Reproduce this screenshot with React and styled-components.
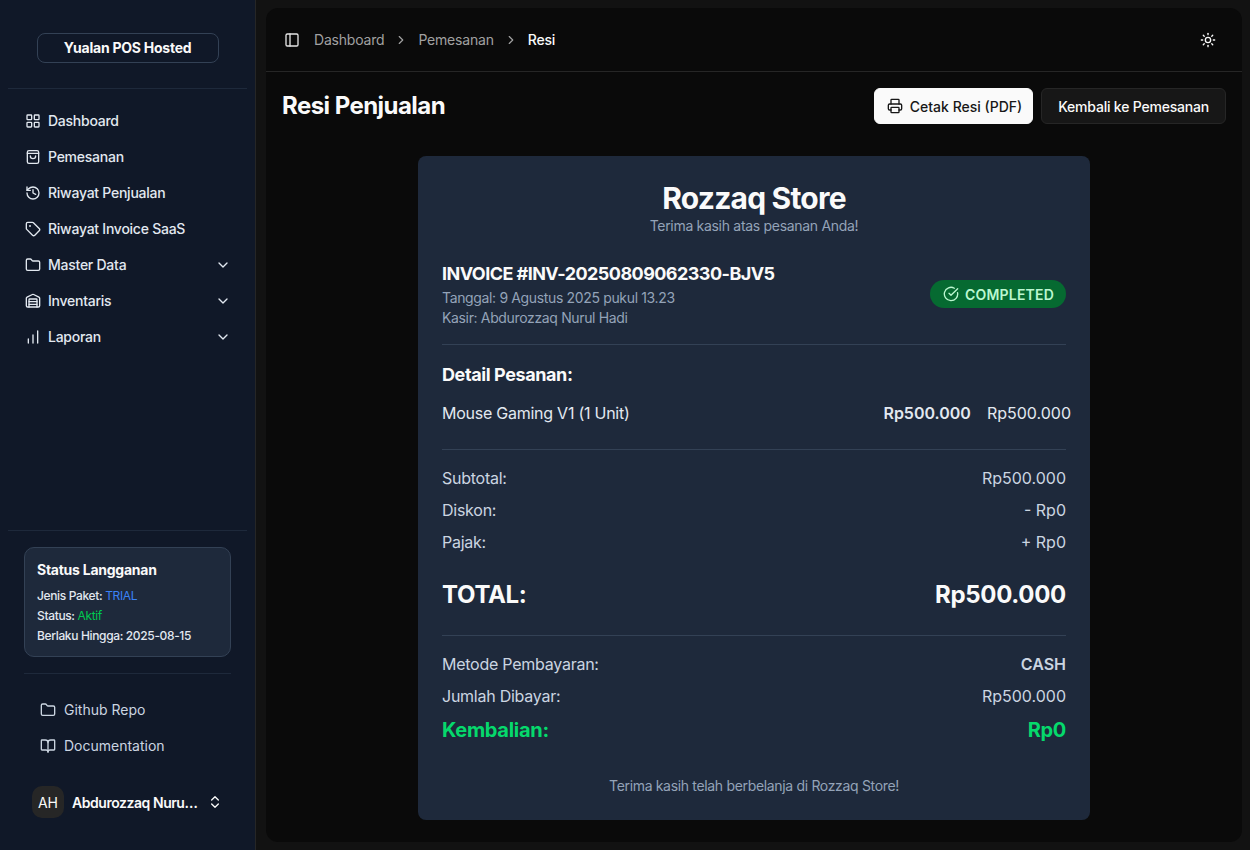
import React from 'react';
import styled, { createGlobalStyle } from 'styled-components';
import {
  LayoutGrid, History, Tag, Folder, Warehouse, ChartNoAxesColumnIncreasing, ChevronDown, ChevronRight,
  PanelLeft, Sun, Printer, CircleCheckBig, BookOpen, ChevronsUpDown,
} from 'lucide-react';

const Global = createGlobalStyle`
  html, body { margin: 0; height: 100%; background: #121212; }
  body { font-family: "Inter", "Liberation Sans", sans-serif; color: #fafafa; }
  * { box-sizing: border-box; }
`;

const Page = styled.div`
  display: flex;
  width: 1250px;
  height: 850px;
  overflow: hidden;
`;

const Sidebar = styled.aside`
  width: 256px;
  flex: none;
  height: 100%;
  display: flex;
  flex-direction: column;
  background: #101828;
  border-right: 1px solid #262626;
`;

const SidebarHead = styled.div`
  margin: 0 8px;
  padding: 33px 0 25px;
  display: flex;
  justify-content: center;
  border-bottom: 1px solid #1e293b;
`;

const Brand = styled.div`
  width: 182px;
  height: 30px;
  display: flex;
  align-items: center;
  justify-content: center;
  padding-bottom: 1px;
  border: 1px solid #334155;
  border-radius: 8px;
  font-size: 14px;
  font-weight: 700;
  letter-spacing: -0.25px;
`;

const Nav = styled.nav`
  flex: 1;
  padding: 14px 16px;
  display: flex;
  flex-direction: column;
`;

const NavItem = styled.div`
  height: 36px;
  display: flex;
  align-items: center;
  gap: 7px;
  padding: 0 8px 0 9px;
  font-size: 14px;
  font-weight: 500;
  color: #e2e8f0;
  letter-spacing: -0.25px;
  svg { flex: none; }
`;

const NavLabel = styled.span`
  flex: 1;
  padding-bottom: 1px;
`;

const FooterTop = styled.div`
  margin: 0 8px;
  padding: 16px;
  border-top: 1px solid #1e293b;
`;

const StatusCard = styled.div`
  height: 110px;
  padding: 13px 12px;
  background: #1e293b;
  border: 1px solid #334155;
  border-radius: 10px;
`;

const StatusTitle = styled.div`
  font-size: 14px;
  font-weight: 700;
  margin-bottom: 7px;
  line-height: 18px;
  letter-spacing: -0.25px;
`;

const StatusLine = styled.div`
  font-size: 12px;
  font-weight: 500;
  line-height: 20px;
  color: #e2e8f0;
  letter-spacing: -0.35px;
`;

const Accent = styled.span`
  font-weight: 400;
  color: ${p => p.$color};
`;

const FooterBottom = styled.div`
  margin: 0 24px;
  padding: 18px 16px 0;
  border-top: 1px solid #1e293b;
`;

const FooterLink = styled(NavItem)`
  padding: 0;
  gap: 8px;
  font-weight: 400;
  color: #cbd5e1;
  letter-spacing: 0;
`;

const UserRow = styled.div`
  display: flex;
  align-items: center;
  margin: 0 0 32px 32px;
  gap: 8px;
  padding-top: 22px;
`;

const Avatar = styled.div`
  width: 32px;
  height: 32px;
  display: flex;
  align-items: center;
  justify-content: center;
  border-radius: 10px;
  background: #262626;
  font-size: 14px;
`;

const UserName = styled.div`
  width: 127px;
  font-size: 14px;
  font-weight: 600;
  white-space: nowrap;
  overflow: hidden;
  text-overflow: ellipsis;
  letter-spacing: -0.45px;
`;

const MainWrap = styled.div`
  flex: 1;
  padding: 8px 8px 8px 10px;
`;

const Main = styled.main`
  height: 100%;
  background: #0a0a0a;
  border-radius: 12px;
  display: flex;
  flex-direction: column;
`;

const TopBar = styled.header`
  height: 64px;
  flex: none;
  padding: 0 26px 0 18px;
  display: flex;
  align-items: center;
  border-bottom: 1px solid #262626;
`;

const Crumbs = styled.div`
  flex: 1;
  display: flex;
  align-items: center;
  gap: 10px;
  margin-left: 14px;
  font-size: 14px;
  color: #a1a1a1;
  letter-spacing: -0.2px;
`;

const Crumb = styled.span`
  color: ${p => (p.$current ? '#fafafa' : '#a1a1a1')};
  font-weight: ${p => (p.$current ? 500 : 400)};
`;

const TitleRow = styled.div`
  padding: 16px 16px 0;
  display: flex;
  align-items: center;
  gap: 8px;
`;

const Title = styled.h1`
  flex: 1;
  margin: 0;
  padding-bottom: 2px;
  font-size: 24px;
  font-weight: 700;
  letter-spacing: -0.55px;
`;

const Button = styled.button`
  height: 36px;
  display: flex;
  align-items: center;
  gap: 7px;
  padding: 0 ${p => (p.$light ? '10px' : '16px')} 0 ${p => (p.$light ? '12px' : '16px')};
  border-radius: 6px;
  border: 1px solid ${p => (p.$light ? '#fafafa' : '#262626')};
  background: ${p => (p.$light ? '#fafafa' : '#171717')};
  color: ${p => (p.$light ? '#171717' : '#fafafa')};
  font-family: inherit;
  font-size: 14px;
  font-weight: 500;
  letter-spacing: ${p => (p.$light ? '0' : '-0.2px')};
`;

const Content = styled.div`
  flex: 1;
  display: flex;
  justify-content: center;
  padding-top: 32px;
`;

const Receipt = styled.section`
  width: 672px;
  height: 664px;
  padding: 24px;
  background: #1e293b;
  border-radius: 8px;
`;

const ReceiptHead = styled.div`
  text-align: center;
`;

const StoreName = styled.div`
  font-size: 30px;
  font-weight: 700;
  line-height: 36px;
  letter-spacing: -0.8px;
`;

const Thanks = styled.div`
  font-size: 14px;
  line-height: 20px;
  color: #94a3b8;
  letter-spacing: -0.3px;
`;

const InvoiceRow = styled.div`
  margin-top: 24px;
  padding-bottom: 16px;
  display: flex;
  align-items: center;
  justify-content: space-between;
  border-bottom: 1px solid #334155;
`;

const InvoiceNo = styled.div`
  font-size: 18px;
  font-weight: 700;
  line-height: 28px;
  letter-spacing: -0.55px;
`;

const Meta = styled.div`
  font-size: 14px;
  line-height: 20px;
  color: #94a3b8;
  letter-spacing: -0.35px;
`;

const Badge = styled.div`
  height: 28px;
  display: flex;
  align-items: center;
  gap: 6px;
  padding: 0 12px 0 13px;
  border-radius: 14px;
  background: #066a31;
  color: #bbf7d0;
  font-size: 14px;
  font-weight: 600;
  letter-spacing: 0.2px;
`;

const SectionTitle = styled.h2`
  margin: 16px 0 0;
  font-size: 18px;
  font-weight: 700;
  line-height: 28px;
  letter-spacing: -0.4px;
`;

const ItemRow = styled.div`
  height: 61px;
  padding-top: 12px;
  display: flex;
  justify-content: space-between;
  font-size: 16px;
  line-height: 24px;
  color: #e2e8f0;
  border-bottom: 1px solid #334155;
`;

const ItemName = styled.span`
  letter-spacing: -0.25px;
`;

const ItemPrices = styled.div`
  display: flex;
  gap: 16px;
  margin-right: -5px;
`;

const Strong = styled.span`
  font-weight: 600;
`;

const Totals = styled.div`
  padding-top: 16px;
  display: flex;
  flex-direction: column;
  gap: 8px;
`;

const Line = styled.div`
  display: flex;
  justify-content: space-between;
  font-size: 16px;
  line-height: 24px;
  color: #cbd5e1;
`;

const LineLabel = styled.span`
  letter-spacing: -0.25px;
`;

const GrandTotal = styled.div`
  margin-top: 17px;
  padding-bottom: 24px;
  display: flex;
  justify-content: space-between;
  font-size: 24px;
  font-weight: 700;
  line-height: 32px;
  letter-spacing: -0.3px;
  border-bottom: 1px solid #334155;
`;

const Payment = styled.div`
  padding-top: 16px;
  display: flex;
  flex-direction: column;
  gap: 8px;
`;

const Change = styled(Line)`
  font-size: 20px;
  font-weight: 700;
  line-height: 28px;
  color: #05d96c;
  letter-spacing: -0.3px;
`;

const ReceiptFoot = styled.div`
  margin-top: 32px;
  text-align: center;
  font-size: 14px;
  line-height: 20px;
  color: #94a3b8;
  letter-spacing: -0.33px;
`;

const BagIcon = () => (
  <svg width="16" height="16" viewBox="0 0 24 24" fill="none" stroke="currentColor" strokeWidth="2" strokeLinecap="round" strokeLinejoin="round">
    <rect x="3.5" y="2.5" width="17" height="19" rx="2.5" />
    <path d="M3.5 6.5h17" />
    <path d="M16 10.5a4 4 0 0 1-8 0" />
  </svg>
);

const menu = [
  { label: 'Dashboard', icon: <LayoutGrid size={16} /> },
  { label: 'Pemesanan', icon: <BagIcon /> },
  { label: 'Riwayat Penjualan', icon: <History size={16} /> },
  { label: 'Riwayat Invoice SaaS', icon: <Tag size={16} /> },
  { label: 'Master Data', icon: <Folder size={16} />, more: true },
  { label: 'Inventaris', icon: <Warehouse size={16} />, more: true },
  { label: 'Laporan', icon: <ChartNoAxesColumnIncreasing size={16} />, more: true },
];

export default function App() {
  return (
    <Page>
      <Global />
      <Sidebar>
        <SidebarHead>
          <Brand>Yualan POS Hosted</Brand>
        </SidebarHead>
        <Nav>
          {menu.map(m => (
            <NavItem key={m.label}>
              {m.icon}
              <NavLabel>{m.label}</NavLabel>
              {m.more && <ChevronDown size={16} />}
            </NavItem>
          ))}
        </Nav>
        <FooterTop>
          <StatusCard>
            <StatusTitle>Status Langganan</StatusTitle>
            <StatusLine>Jenis Paket: <Accent $color="#3b82f6">TRIAL</Accent></StatusLine>
            <StatusLine>Status: <Accent $color="#00c950">Aktif</Accent></StatusLine>
            <StatusLine>Berlaku Hingga: 2025-08-15</StatusLine>
          </StatusCard>
        </FooterTop>
        <FooterBottom>
          <FooterLink><Folder size={16} /><NavLabel>Github Repo</NavLabel></FooterLink>
          <FooterLink><BookOpen size={16} /><NavLabel>Documentation</NavLabel></FooterLink>
        </FooterBottom>
        <UserRow>
          <Avatar>AH</Avatar>
          <UserName>Abdurozzaq Nurul Hadi</UserName>
          <ChevronsUpDown size={16} />
        </UserRow>
      </Sidebar>
      <MainWrap>
        <Main>
          <TopBar>
            <PanelLeft size={16} color="#e5e5e5" />
            <Crumbs>
              <Crumb>Dashboard</Crumb>
              <ChevronRight size={14} />
              <Crumb>Pemesanan</Crumb>
              <ChevronRight size={14} />
              <Crumb $current>Resi</Crumb>
            </Crumbs>
            <Sun size={16} />
          </TopBar>
          <TitleRow>
            <Title>Resi Penjualan</Title>
            <Button $light><Printer size={16} />Cetak Resi (PDF)</Button>
            <Button>Kembali ke Pemesanan</Button>
          </TitleRow>
          <Content>
            <Receipt>
              <ReceiptHead>
                <StoreName>Rozzaq Store</StoreName>
                <Thanks>Terima kasih atas pesanan Anda!</Thanks>
              </ReceiptHead>
              <InvoiceRow>
                <div>
                  <InvoiceNo>INVOICE #INV-20250809062330-BJV5</InvoiceNo>
                  <Meta>Tanggal: 9 Agustus 2025 pukul 13.23</Meta>
                  <Meta>Kasir: Abdurozzaq Nurul Hadi</Meta>
                </div>
                <Badge><CircleCheckBig size={16} />COMPLETED</Badge>
              </InvoiceRow>
              <SectionTitle>Detail Pesanan:</SectionTitle>
              <ItemRow>
                <ItemName>Mouse Gaming V1 (1 Unit)</ItemName>
                <ItemPrices>
                  <Strong>Rp500.000</Strong>
                  <span>Rp500.000</span>
                </ItemPrices>
              </ItemRow>
              <Totals>
                <Line><LineLabel>Subtotal:</LineLabel><span>Rp500.000</span></Line>
                <Line><LineLabel>Diskon:</LineLabel><span>- Rp0</span></Line>
                <Line><LineLabel>Pajak:</LineLabel><span>+ Rp0</span></Line>
                <GrandTotal><span>TOTAL:</span><span>Rp500.000</span></GrandTotal>
              </Totals>
              <Payment>
                <Line><LineLabel>Metode Pembayaran:</LineLabel><Strong>CASH</Strong></Line>
                <Line><LineLabel>Jumlah Dibayar:</LineLabel><span>Rp500.000</span></Line>
                <Change><span>Kembalian:</span><span>Rp0</span></Change>
              </Payment>
              <ReceiptFoot>Terima kasih telah berbelanja di Rozzaq Store!</ReceiptFoot>
            </Receipt>
          </Content>
        </Main>
      </MainWrap>
    </Page>
  );
}
